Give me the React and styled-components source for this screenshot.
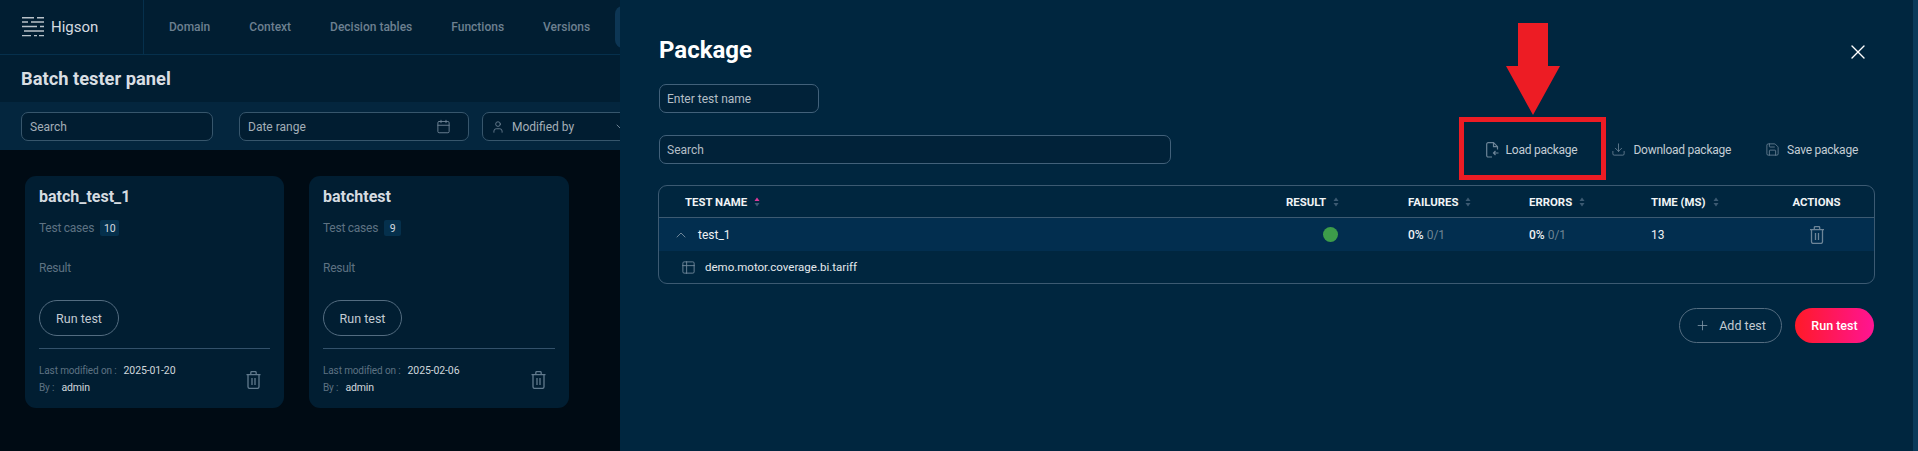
import styled, { createGlobalStyle } from "styled-components";
import { Calendar, User, ChevronDown, ChevronUp, Download, Save, Plus, X, Table2 } from "lucide-react";

const GlobalStyle = createGlobalStyle`
  html, body {
    margin: 0;
    padding: 0;
    background: #000b14;
    overflow: hidden;
  }
  * {
    box-sizing: border-box;
  }
`;

const Page = styled.div`
  display: flex;
  width: 1918px;
  height: 451px;
  font-family: "Roboto", sans-serif;
  overflow: hidden;
`;

const Backdrop = styled.div`
  display: flex;
  flex-direction: column;
  width: 620px;
  flex-shrink: 0;
  overflow: hidden;
  background: #000b14;
`;

const TopBar = styled.div`
  display: flex;
  height: 55px;
  background: #011e32;
  border-bottom: 1px solid #06304c;
  flex-shrink: 0;
`;

const Brand = styled.div`
  display: flex;
  align-items: center;
  gap: 7px;
  width: 144px;
  flex-shrink: 0;
  padding-left: 22px;
  border-right: 1px solid #06304c;
  color: #d5dbe0;
  font-size: 15px;
`;

const Nav = styled.div`
  display: flex;
  align-items: center;
  gap: 39px;
  padding-left: 25px;
  flex-shrink: 0;
`;

const NavItem = styled.span`
  color: #6d8090;
  font-size: 12px;
  font-weight: 500;
  white-space: nowrap;
`;

const ActiveTab = styled.div`
  width: 60px;
  height: 42px;
  flex-shrink: 0;
  margin-left: -14px;
  background: #0d3654;
  border-radius: 8px;
`;

const TitleRow = styled.div`
  display: flex;
  align-items: center;
  height: 47px;
  padding-left: 21px;
  background: #011e32;
  color: #d9dee3;
  font-size: 18.300px;
  font-weight: 700;
  flex-shrink: 0;
`;

const FilterBar = styled.div`
  display: flex;
  align-items: center;
  height: 48px;
  padding-left: 21px;
  background: #04263e;
  flex-shrink: 0;
`;

const FilterBox = styled.div`
  display: flex;
  align-items: center;
  flex-shrink: 0;
  width: ${(p) => p.$width}px;
  height: 29px;
  margin-right: ${(p) => p.$gap || 0}px;
  padding: 1px 8px 0;
  background: #011d31;
  border: 1px solid #37566c;
  border-radius: 7px;
  color: #a4afb8;
  font-size: 12px;
  svg {
    color: #73889a;
    flex-shrink: 0;
  }
`;

const Grow = styled.span`
  flex: 1;
`;

const Cards = styled.div`
  display: flex;
  gap: 25px;
  padding: 26px 25px;
`;

const Card = styled.div`
  display: flex;
  flex-direction: column;
  width: ${(p) => p.$width}px;
  height: 232px;
  padding: 11px 14px 0;
  background: #011e32;
  border-radius: 11px;
`;

const CardTitle = styled.div`
  color: #d5dbe0;
  font-size: 16px;
  font-weight: 700;
  line-height: 20px;
`;

const CardRow = styled.div`
  display: flex;
  align-items: center;
  gap: 6px;
  height: 16px;
  margin-top: ${(p) => p.$top}px;
  color: #5e7282;
  font-size: 12px;
  letter-spacing: -0.25px;
`;

const CountBadge = styled.span`
  display: flex;
  align-items: center;
  justify-content: center;
  min-width: 17px;
  padding: 0 4px;
  height: 16px;
  background: #05304c;
  border-radius: 2px;
  color: #d5dbe0;
  font-size: 10.500px;
`;

const OutlineButton = styled.button`
  display: flex;
  align-items: center;
  justify-content: center;
  gap: 9px;
  width: ${(p) => p.$width}px;
  height: ${(p) => p.$height}px;
  margin-top: ${(p) => p.$top || 0}px;
  padding: 0;
  background: transparent;
  border: 1px solid #536c80;
  border-radius: 18px;
  color: #c3cbd2;
  font-family: inherit;
  font-size: 12.500px;
  svg {
    color: #8398a8;
  }
`;

const CardRule = styled.div`
  height: 1px;
  margin-top: 12px;
  background: #33516a;
`;

const CardFooter = styled.div`
  display: flex;
  justify-content: space-between;
  margin-top: 13px;
  padding-right: 9px;
  svg {
    margin-top: 9px;
    color: #617a8d;
  }
`;

const FooterLine = styled.div`
  display: flex;
  gap: 7px;
  height: 17px;
  align-items: center;
  color: #5e7282;
  font-size: 10px;
  letter-spacing: -0.12px;
  white-space: nowrap;
  b {
    font-weight: 400;
    font-size: 10.500px;
    color: #d0d7dc;
  }
`;

const Drawer = styled.div`
  position: relative;
  width: 1293px;
  flex-shrink: 0;
  padding: 34px 38px 0 39px;
  background: #00263f;
`;

const ScrollEdge = styled.div`
  width: 5px;
  flex-shrink: 0;
  background: #0a3a5a;
`;

const DrawerTitle = styled.h1`
  margin: 0;
  color: #fff;
  font-size: 24px;
  font-weight: 700;
  line-height: 32px;
`;

const CloseIcon = styled(X)`
  position: absolute;
  top: 40px;
  right: 43px;
  color: #fff;
`;

const TextBox = styled.div`
  display: flex;
  align-items: center;
  width: ${(p) => p.$width}px;
  height: 29px;
  margin-top: ${(p) => p.$top || 0}px;
  padding: 1px 0 0 7px;
  background: #012239;
  border: 1px solid #42617a;
  border-radius: 7px;
  color: #b4bec6;
  font-size: 12px;
`;

const Toolbar = styled.div`
  display: flex;
  align-items: center;
  justify-content: space-between;
  margin-top: 22px;
  padding-right: 17px;
`;

const ToolActions = styled.div`
  display: flex;
  align-items: center;
  gap: 34px;
`;

const ToolAction = styled.span`
  display: flex;
  align-items: center;
  gap: 7px;
  color: #c3cdd5;
  font-size: 12px;
  letter-spacing: -0.25px;
  svg {
    color: #6d8598;
  }
`;

const TableBox = styled.div`
  margin: 21px 0 0 -1px;
  border: 1px solid #3c5a72;
  border-radius: 9px;
  overflow: hidden;
`;

const TableRow = styled.div`
  display: grid;
  grid-template-columns: 627px 122px 121px 122px 108px 1fr;
  align-items: center;
  height: ${(p) => p.$height}px;
  background: ${(p) => (p.$active ? "#022e4f" : "transparent")};
  border-bottom: ${(p) => (p.$ruled ? "1px solid #3c5a72" : "none")};
`;

const HeadCell = styled.div`
  display: flex;
  align-items: center;
  justify-content: ${(p) => (p.$center ? "center" : "flex-start")};
  gap: 7px;
  padding-left: ${(p) => p.$pad || 0}px;
  color: #f1f4f6;
  font-size: 11.400px;
  font-weight: 700;
`;

const Cell = styled.div`
  display: flex;
  align-items: center;
  justify-content: ${(p) => (p.$center ? "center" : "flex-start")};
  gap: ${(p) => p.$gap || 0}px;
  padding-left: ${(p) => p.$pad || 0}px;
  color: #eef1f3;
  font-size: 12px;
  svg {
    color: #6d8598;
  }
  b {
    font-weight: 500;
  }
  em {
    margin-left: 3px;
    font-style: normal;
    color: #6f8494;
  }
`;

const ResultDot = styled.span`
  width: 15px;
  height: 15px;
  border-radius: 50%;
  background: #3d9c4a;
`;

const SubRow = styled.div`
  display: flex;
  align-items: center;
  gap: 9px;
  height: 32px;
  padding-left: 22px;
  color: #e4e9ec;
  font-size: 11.500px;
  svg {
    color: #6d8598;
  }
`;

const Footer = styled.div`
  display: flex;
  justify-content: flex-end;
  gap: 13px;
  margin-top: 24px;
  padding-right: 1px;
`;

const PrimaryButton = styled.button`
  width: 79px;
  height: 35px;
  padding: 0;
  background: linear-gradient(90deg, #ff1a28, #ff1493);
  border: none;
  border-radius: 18px;
  color: #fff;
  font-family: inherit;
  font-size: 12.500px;
  font-weight: 500;
`;

const RedBox = styled.div`
  position: absolute;
  top: 117px;
  left: 839px;
  width: 147px;
  height: 63px;
  border: 5px solid #ed1c24;
`;

const RedArrow = styled.svg`
  position: absolute;
  top: 23px;
  left: 886px;
`;

function LogoMark() {
  return (
    <svg width="22" height="20" viewBox="0 0 22 20" fill="none" stroke="#b9c2c9" strokeWidth="1.4">
      <path d="M0 .7h12M15 .7h7M0 5h6M9 5h13M0 9.500h15M18 9.500h4M2 14h20M0 18.600h9M12 18.600h3M17 18.600h5" />
    </svg>
  );
}

function TrashIcon({ width = 15, height = 18 }) {
  return (
    <svg width={width} height={height} viewBox="0 0 15 18" fill="none" stroke="currentColor" strokeWidth="1.3">
      <path d="M.5 3.600h14M2 3.600v12.200c0 1 .6 1.600 1.600 1.600h7.800c1 0 1.600-.6 1.600-1.600V3.600" />
      <path d="M4.800 3.400V1.700c0-.7.4-1.100 1-1.100h3.400c.6 0 1 .4 1 1.100v1.700M6 7v7M9 7v7" />
    </svg>
  );
}

function LoadIcon() {
  return (
    <svg width="13" height="16" viewBox="0 0 13 16" fill="none" stroke="currentColor" strokeWidth="1.2">
      <path d="M6 15H2.200C1.300 15 .7 14.400 .7 13.500V2.200C.7 1.300 1.300 .7 2.200 .7H7.500L11.500 4.700V7.500" />
      <path d="M7.500 .7V4.700H11.500M12.500 11H7.500M9.500 9L7.500 11L9.500 13" />
    </svg>
  );
}

function SortIcon({ active }) {
  return (
    <svg width="6" height="10" viewBox="0 0 6 10">
      <path d="M3 .5L5.500 4H.5z" fill={active ? "#e0389b" : "#3c5a72"} />
      <path d="M3 9.500L.5 6h5z" fill="#3c5a72" />
    </svg>
  );
}

function TestCard({ width, title, count, runWidth, date }) {
  return (
    <Card $width={width}>
      <CardTitle>{title}</CardTitle>
      <CardRow $top={13}>
        Test cases <CountBadge>{count}</CountBadge>
      </CardRow>
      <CardRow $top={24}>Result</CardRow>
      <OutlineButton $width={runWidth} $height={36} $top={24}>
        Run test
      </OutlineButton>
      <CardRule />
      <CardFooter>
        <div>
          <FooterLine>
            Last modified on : <b>{date}</b>
          </FooterLine>
          <FooterLine>
            By : <b>admin</b>
          </FooterLine>
        </div>
        <TrashIcon />
      </CardFooter>
    </Card>
  );
}

function App() {
  return (
    <Page>
      <GlobalStyle />
      <Backdrop>
        <TopBar>
          <Brand>
            <LogoMark />
            Higson
          </Brand>
          <Nav>
            <NavItem>Domain</NavItem>
            <NavItem>Context</NavItem>
            <NavItem>Decision tables</NavItem>
            <NavItem>Functions</NavItem>
            <NavItem>Versions</NavItem>
            <ActiveTab />
          </Nav>
        </TopBar>
        <TitleRow>Batch tester panel</TitleRow>
        <FilterBar>
          <FilterBox $width={192} $gap={26}>Search</FilterBox>
          <FilterBox $width={230} $gap={13}>
            <Grow>Date range</Grow>
            <Calendar size={15} strokeWidth={1.4} style={{ marginRight: 9 }} />
          </FilterBox>
          <FilterBox $width={156}>
            <User size={14} strokeWidth={1.4} />
            <Grow style={{ marginLeft: 7 }}>Modified by</Grow>
            <ChevronDown size={16} strokeWidth={1.4} />
          </FilterBox>
        </FilterBar>
        <Cards>
          <TestCard width={259} title="batch_test_1" count="10" runWidth={80} date="2025-01-20" />
          <TestCard width={260} title="batchtest" count="9" runWidth={79} date="2025-02-06" />
        </Cards>
      </Backdrop>

      <Drawer>
        <DrawerTitle>Package</DrawerTitle>
        <CloseIcon size={24} strokeWidth={1.4} />
        <TextBox $width={160} $top={18}>Enter test name</TextBox>
        <Toolbar>
          <TextBox $width={512}>Search</TextBox>
          <ToolActions>
            <ToolAction><LoadIcon />Load package</ToolAction>
            <ToolAction><Download size={15} strokeWidth={1.3} />Download package</ToolAction>
            <ToolAction><Save size={15} strokeWidth={1.3} />Save package</ToolAction>
          </ToolActions>
        </Toolbar>
        <TableBox>
          <TableRow $height={32} $ruled>
            <HeadCell $pad={26}>TEST NAME <SortIcon active /></HeadCell>
            <HeadCell>RESULT <SortIcon /></HeadCell>
            <HeadCell>FAILURES <SortIcon /></HeadCell>
            <HeadCell>ERRORS <SortIcon /></HeadCell>
            <HeadCell>TIME (MS) <SortIcon /></HeadCell>
            <HeadCell $center>ACTIONS</HeadCell>
          </TableRow>
          <TableRow $height={33} $active>
            <Cell $pad={14} $gap={9}><ChevronUp size={16} strokeWidth={1.5} />test_1</Cell>
            <Cell $pad={37}><ResultDot /></Cell>
            <Cell><b>0%</b><em>0/1</em></Cell>
            <Cell><b>0%</b><em>0/1</em></Cell>
            <Cell>13</Cell>
            <Cell $center><TrashIcon width={16} height={18} /></Cell>
          </TableRow>
          <SubRow><Table2 size={15} strokeWidth={1.5} />demo.motor.coverage.bi.tariff</SubRow>
        </TableBox>
        <Footer>
          <OutlineButton $width={103} $height={35}><Plus size={15} strokeWidth={1.3} />Add test</OutlineButton>
          <PrimaryButton>Run test</PrimaryButton>
        </Footer>
        <RedBox />
        <RedArrow width="54" height="92" viewBox="0 0 54 92">
          <path d="M12 0H42V43H54L27 92L0 43H12Z" fill="#ed1c24" />
        </RedArrow>
      </Drawer>
      <ScrollEdge />
    </Page>
  );
}

export default App;
